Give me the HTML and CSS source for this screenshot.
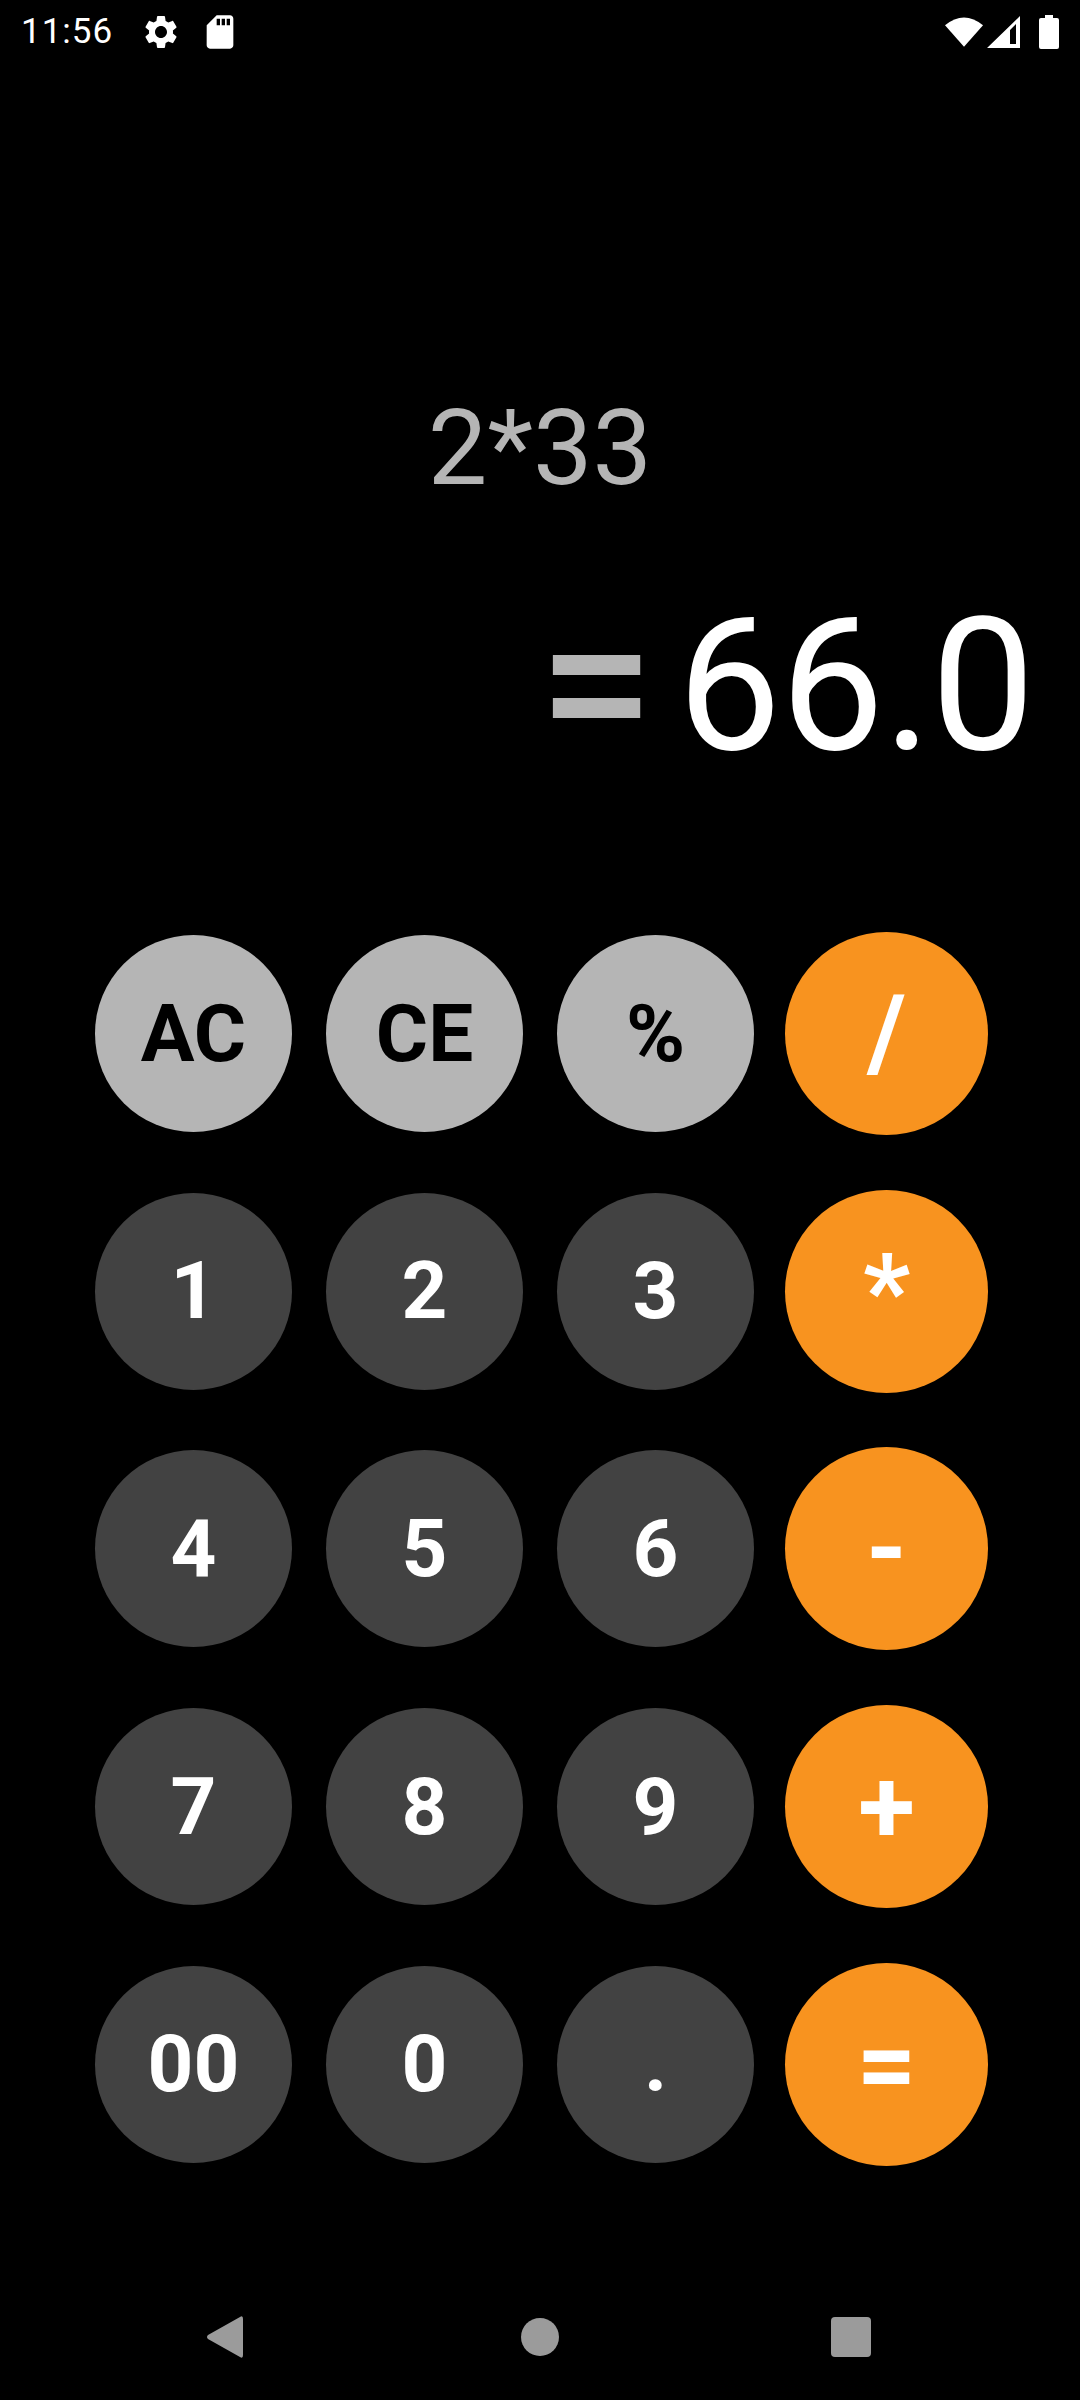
FILE: index.html
```html
<!DOCTYPE html>
<html lang="en">
<head>
    <meta charset="UTF-8">
    <meta name="viewport" content="width=device-width, initial-scale=1.0">
    <title>Calculator</title>
    <link rel="stylesheet" href="styles.css">
</head>
<body>

<div class="screen">
    <div class="status-bar">
        <span class="time">11:56</span>
        <svg class="icon-gear" viewBox="0 0 24 24"><path d="M19.14 12.94c.04-.3.06-.61.06-.94 0-.32-.02-.64-.07-.94l2.03-1.58c.18-.14.23-.41.12-.61l-1.92-3.32c-.12-.22-.37-.29-.59-.22l-2.39.96c-.5-.38-1.03-.7-1.62-.94l-.36-2.54c-.04-.24-.24-.41-.48-.41h-3.84c-.24 0-.43.17-.47.41l-.36 2.54c-.59.24-1.13.57-1.62.94l-2.39-.96c-.22-.08-.47 0-.59.22L2.74 8.87c-.12.21-.08.47.12.61l2.03 1.58c-.05.3-.09.63-.09.94s.02.64.07.94l-2.03 1.58c-.18.14-.23.41-.12.61l1.92 3.32c.12.22.37.29.59.22l2.39-.96c.5.38 1.03.7 1.62.94l.36 2.54c.05.24.24.41.48.41h3.84c.24 0 .44-.17.47-.41l.36-2.54c.59-.24 1.13-.56 1.62-.94l2.39.96c.22.08.47 0 .59-.22l1.92-3.32c.12-.22.07-.47-.12-.61l-2.01-1.58zM12 15.6c-1.98 0-3.6-1.62-3.6-3.6s1.62-3.6 3.6-3.6 3.6 1.62 3.6 3.6-1.62 3.6-3.6 3.6z"/></svg>
        <svg class="icon-sd" viewBox="0 0 24 24"><path d="M18 2h-8L4.02 8 4 20c0 1.1.9 2 2 2h12c1.1 0 2-.9 2-2V4c0-1.1-.9-2-2-2zm-6 6h-2V4h2v4zm3 0h-2V4h2v4zm3 0h-2V4h2v4z"/></svg>
        <div class="status-right">
            <svg class="icon-wifi" viewBox="0 0 40 32"><path d="M0 9Q19.500 -7 39 9L19.500 31Z"/></svg>
            <svg class="icon-signal" viewBox="0 0 33 32"><path fill-rule="evenodd" d="M0 32L33 0V32ZM23 28H29V8L23 14Z"/></svg>
            <svg class="icon-battery" viewBox="0 0 20 34"><path d="M6 0H14V3H18Q20 3 20 5V32Q20 34 18 34H2Q0 34 0 32V5Q0 3 2 3H6Z"/></svg>
        </div>
    </div>

    <div class="display">
        <div class="expression">2*33</div>
        <div class="result"><span class="result-sign">=</span><span class="result-value">66.0</span></div>
    </div>

    <div class="keypad">
        <button class="key key-light">AC</button>
        <button class="key key-light">CE</button>
        <button class="key key-light">%</button>
        <button class="key key-op">/</button>
        <button class="key">1</button>
        <button class="key">2</button>
        <button class="key">3</button>
        <button class="key key-op">*</button>
        <button class="key">4</button>
        <button class="key">5</button>
        <button class="key">6</button>
        <button class="key key-op">-</button>
        <button class="key">7</button>
        <button class="key">8</button>
        <button class="key">9</button>
        <button class="key key-op">+</button>
        <button class="key">00</button>
        <button class="key">0</button>
        <button class="key">.</button>
        <button class="key key-op">=</button>
    </div>

    <div class="nav-bar">
        <svg class="nav-back" viewBox="0 0 36 42"><path d="M33 1Q36 -1 36 3V39Q36 43 33 41L1 23Q-1 21 1 19Z"/></svg>
        <div class="nav-home"></div>
        <div class="nav-recent"></div>
    </div>
</div>

</body>
</html>
```

FILE: styles.css
```css
body {
    margin: 0;
    background-color: #000;
    font-family: 'Roboto', sans-serif;
}

.screen {
    width: 1080px;
    height: 2400px;
    display: flex;
    flex-direction: column;
    overflow: hidden;
}

/* status bar */
.status-bar {
    height: 63px;
    display: flex;
    align-items: center;
    padding-left: 21px;
    box-sizing: border-box;
    color: #fff;
    fill: #fff;
}

.time {
    font-size: 35px;
    width: 120px;
    letter-spacing: 1px;
}

.icon-gear {
    width: 40px;
    height: 40px;
}

.icon-sd {
    width: 40px;
    height: 40px;
    margin-left: 19px;
}

.status-right {
    margin-left: auto;
    padding-right: 21px;
    display: flex;
    align-items: center;
}

.icon-wifi {
    width: 39px;
    height: 32px;
}

.icon-signal {
    width: 33px;
    height: 32px;
    margin-left: 3px;
}

.icon-battery {
    width: 20px;
    height: 34px;
    margin-left: 19px;
}

/* display */
.display {
    height: 842px;
    box-sizing: border-box;
    padding-top: 323px;
}

.expression {
    font-size: 106px;
    line-height: 124px;
    text-align: center;
    color: #b5b5b5;
}

.result {
    margin-top: 64px;
    padding-right: 46px;
    height: 220px;
    line-height: 220px;
    text-align: right;
    white-space: nowrap;
}

.result-sign {
    font-size: 206px;
    font-weight: 500;
    color: #b5b5b5;
    margin-right: 23px;
    vertical-align: -5px;
}

.result-value {
    font-size: 185px;
    letter-spacing: -1px;
    color: #fff;
}

/* keypad */
.keypad {
    display: grid;
    grid-template-columns: repeat(4, 231px);
    grid-auto-rows: 257.6px;
    place-items: center;
    padding-left: 78px;
}

.key {
    width: 197px;
    height: 197px;
    padding: 0;
    border: none;
    border-radius: 50%;
    background-color: #424242;
    color: #fff;
    font-family: inherit;
    font-size: 80px;
    font-weight: 700;
}

.key-light {
    background-color: #b5b5b5;
    color: #000;
}

.key-op {
    width: 203px;
    height: 203px;
    background-color: #f8931f;
    font-size: 104px;
}

/* nav bar */
.nav-bar {
    padding-top: 123px;
    padding-left: 207px;
    display: flex;
    align-items: center;
    fill: #9b9b9b;
}

.nav-back {
    width: 36px;
    height: 42px;
}

.nav-home {
    width: 38px;
    height: 38px;
    margin-left: 278px;
    border-radius: 50%;
    background-color: #9b9b9b;
}

.nav-recent {
    width: 40px;
    height: 40px;
    margin-left: 272px;
    border-radius: 4px;
    background-color: #9b9b9b;
}
```
